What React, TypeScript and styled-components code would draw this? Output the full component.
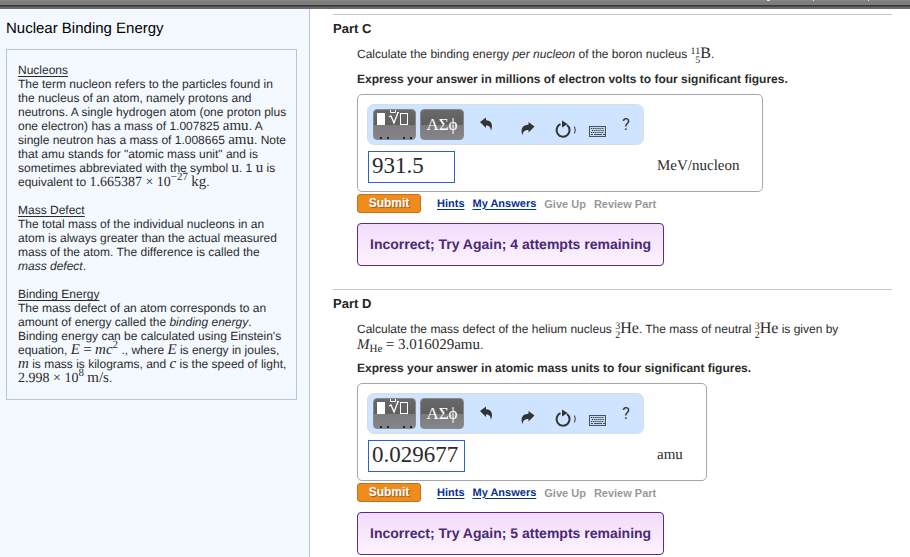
import React, { useState } from "react";
import styled, { createGlobalStyle } from "styled-components";

const SERIF = '"Liberation Serif", "Times New Roman", serif';

const GlobalStyle = createGlobalStyle`
  *, *::before, *::after { box-sizing: border-box; }
  html, body { margin: 0; padding: 0; }
  body {
    background: #fff;
    color: #2b2b2b;
    font-family: "Liberation Sans", Arial, Helvetica, sans-serif;
    font-size: 12px;
    line-height: 14px;
    text-rendering: geometricPrecision;
  }
`;

const Page = styled.div`
  display: flex;
  flex-direction: column;
  min-height: 100vh;
`;

const TopBar = styled.header`
  height: 9px;
  background: linear-gradient(#868686 0 1px, #7d7d7d 1px 5px, #383838 5px 6px, #4a4a4a 6px 7px, #6b6b6b 7px 9px);
  display: flex;
  justify-content: flex-end;
  padding-right: 40px;
`;

const Columns = styled.div`
  flex: 1;
  display: grid;
  grid-template-columns: 310px minmax(0, 1fr);
`;

const Sidebar = styled.aside`
  background: #f4f9ff;
  border-right: 1px solid #b4c7d9;
  padding: 10px 12px 0 6px;
`;

const Title = styled.h1`
  margin: 0 0 10px;
  font-size: 15px;
  line-height: 20px;
  font-weight: 400;
  color: #000;
`;

const InfoBox = styled.div`
  border: 1px solid #b4c7d9;
  padding: 13px 0 14px 11px;
  white-space: nowrap;
`;

const Topic = styled.section`
  & + & { margin-top: 14px; }
`;

const TopicTitle = styled.h2`
  margin: 0;
  font-size: 12px;
  line-height: 14px;
  font-weight: 400;
  text-decoration: underline;
  text-underline-offset: 2px;
`;

const TopicText = styled.p`
  margin: 0;
`;

const MathText = styled.span<{ $italic?: boolean; $size?: number }>`
  font-family: ${SERIF};
  font-size: ${(p) => p.$size ?? 15}px;
  font-style: ${(p) => (p.$italic ? "italic" : "normal")};
  line-height: 0;
`;

const Script = styled.span<{ $shift: number }>`
  font-family: ${SERIF};
  font-size: 11px;
  line-height: 0;
  vertical-align: ${(p) => p.$shift}px;
`;

const NuclideSymbol = styled.span`
  font-family: ${SERIF};
  font-size: 16px;
  line-height: 0;
`;

const Indices = styled.span`
  display: inline-flex;
  flex-direction: column;
  align-items: flex-end;
  height: 16px;
  vertical-align: middle;
  font-family: ${SERIF};
  font-size: 10px;
  line-height: 9px;
`;

const Main = styled.main`
  padding: 5px 18px 0 23px;
`;

const Part = styled.section`
  border-top: 1px solid #c6c6c6;
  padding-top: 5px;
  & + & { margin-top: 23px; }
`;

const PartTitle = styled.h2`
  margin: 0 0 9px;
  font-size: 13px;
  line-height: 18px;
  font-weight: 700;
  color: #222;
`;

const PartBody = styled.div`
  padding-left: 24px;
`;

const Question = styled.p`
  margin: 0;
  line-height: 14px;
`;

const Instruction = styled.p`
  margin: 9px 0 8px;
  font-weight: 700;
`;

const AnswerBox = styled.div`
  width: fit-content;
  border: 1px solid #a6a6a6;
  border-radius: 5px;
  padding: 9px 23px 8px 9px;
`;

const Toolbar = styled.div`
  display: flex;
  align-items: center;
  width: 277px;
  height: 41px;
  padding-left: 5px;
  border: 1px solid #d9dde3;
  border-radius: 7px;
  background: #cfe5ff;
`;

const PaletteButton = styled.button<{ $width: number }>`
  width: ${(p) => p.$width}px;
  height: 31px;
  margin-right: 4px;
  padding: 0;
  border: 1px solid #8a8a8c;
  border-radius: 4px;
  overflow: hidden;
  background: linear-gradient(#686868 0%, #5f5f61 50%, #7c7c80 52%, #858589 100%);
  color: #fff;
  font-family: ${SERIF};
  font-size: 17px;
  line-height: 29px;
  svg { display: block; }
`;

const ToolButton = styled.button<{ $gap?: number }>`
  width: 20px;
  height: 38px;
  margin: 0 0 0 ${(p) => p.$gap ?? 0}px;
  padding: 0;
  border: 0;
  background: none;
  color: #333;
  font-family: Roboto, sans-serif;
  font-size: 16px;
  line-height: 38px;
  svg { display: block; }
`;

const ToolGroup = styled.div`
  display: flex;
  margin-left: 10px;
`;

const EntryRow = styled.label`
  display: flex;
  align-items: center;
  margin-top: 6px;
`;

const EntrySlot = styled.span`
  width: 290px;
  padding-left: 1px;
  display: flex;
`;

const Unit = styled.span`
  padding-bottom: 2px;
  font-family: ${SERIF};
  font-size: 15px;
  line-height: 16px;
`;

const Entry = styled.input<{ $width: number }>`
  width: ${(p) => p.$width}px;
  height: 32px;
  padding: 0 0 2px 3px;
  border: 1px solid #2c62cc;
  border-radius: 0;
  outline: 0;
  background: #fff;
  color: #2b2b2b;
  font-family: ${SERIF};
  font-size: 23px;
`;

const Actions = styled.div`
  display: flex;
  align-items: center;
  gap: 8px;
  margin-top: 2px;
  font-size: 11px;
  font-weight: 700;
`;

const Submit = styled.button`
  width: 64px;
  height: 19px;
  margin-right: 8px;
  padding: 0;
  border: 1px solid #c8701c;
  border-radius: 3px;
  background: #f08c1e;
  color: #fff;
  font: 700 12px/17px "Liberation Sans", Arial, sans-serif;
  text-shadow: 1px 1px 1px #8f5a1c;
`;

const ActionLink = styled.a`
  color: #06328c;
  text-decoration: underline;
  text-underline-offset: 2px;
`;

const ActionOff = styled.button`
  padding: 0;
  border: 0;
  background: none;
  color: #999;
  font: inherit;
`;

const Feedback = styled.div`
  width: fit-content;
  margin-top: 10px;
  padding: 12px 12px 13px;
  border: 1px solid #64287e;
  border-radius: 4px;
  background: linear-gradient(#f1dcfb, #fdf3ff);
  color: #4b2a73;
  font-size: 14px;
  line-height: 16px;
  font-weight: 700;
`;

function Nuclide({ mass, charge, symbol }: { mass: string; charge: string; symbol: string }) {
  return (
    <>
      <Indices>
        <span>{mass}</span>
        <span>{charge}</span>
      </Indices>
      <NuclideSymbol>{symbol}</NuclideSymbol>
    </>
  );
}

function TemplateIcon() {
  return (
    <svg width="41" height="29" viewBox="0 0 41 29" fill="none">
      <rect x="3" y="3" width="8" height="12" fill="#fff" />
      <rect x="26.500" y="3.500" width="7" height="11" stroke="#fff" />
      <path d="M15 7l2-1 3 7L24 2.500" stroke="#fff" strokeWidth="1.300" />
      <path d="M16.500 0v2.500h5V0M23 2.500h2" stroke="#fff" />
      <path d="M6 28h2M13 28h2M29 28h2M36 28h2" stroke="#252525" strokeWidth="2" />
    </svg>
  );
}

function UndoIcon() {
  return (
    <svg width="20" height="38" viewBox="0 0 20 38">
      <path d="M2 16L8 11.500v2.800c5 0 7.500 3.500 5 10.700-.3-4-2-5.500-5-5.500V22z" fill="#333" />
    </svg>
  );
}

function RedoIcon() {
  return (
    <svg width="20" height="38" viewBox="0 0 20 38">
      <path d="M16.500 20.500L10.500 16v2.800C5 18.800 2 22.500 4.500 29.500c.3-4 2.200-5.500 6-5.500v2.500z" fill="#333" />
    </svg>
  );
}

function ResetIcon() {
  return (
    <svg width="24" height="38" viewBox="0 0 24 38" fill="none">
      <path d="M6.500 18.200a6.500 6.500 0 1 0 6.500.8" stroke="#333" strokeWidth="2" />
      <path d="M8 14.500l5.500 3.500-5.500 3.500z" fill="#333" />
      <path d="M20.500 20.500q1.500 3.500 0 7" stroke="#333" />
    </svg>
  );
}

function KeyboardIcon() {
  return (
    <svg width="20" height="38" viewBox="0 0 20 38" fill="none">
      <rect x="1.500" y="20.500" width="16" height="10" fill="#c9d8e8" stroke="#46525f" />
      <path d="M3 22.500h13M4 24.500h12M3 26.500h13" stroke="#333d48" strokeDasharray="1.300 .8" />
      <path d="M3 28.500h2M6 28.500h8M15 28.500h2" stroke="#46525f" />
    </svg>
  );
}

interface AnswerProps {
  initial: string;
  unit: string;
  entryWidth: number;
  attempts: number;
}

function Answer({ initial, unit, entryWidth, attempts }: AnswerProps) {
  const [value, setValue] = useState(initial);
  return (
    <>
      <AnswerBox>
        <Toolbar>
          <PaletteButton type="button" $width={43} aria-label="Templates">
            <TemplateIcon />
          </PaletteButton>
          <PaletteButton type="button" $width={44}>ΑΣϕ</PaletteButton>
          <ToolGroup>
            <ToolButton type="button" aria-label="Undo"><UndoIcon /></ToolButton>
            <ToolButton type="button" $gap={20} aria-label="Redo"><RedoIcon /></ToolButton>
            <ToolButton type="button" $gap={16} aria-label="Reset"><ResetIcon /></ToolButton>
            <ToolButton type="button" $gap={14} aria-label="Keyboard shortcuts"><KeyboardIcon /></ToolButton>
            <ToolButton type="button" $gap={8}>?</ToolButton>
          </ToolGroup>
        </Toolbar>
        <EntryRow>
          <EntrySlot>
            <Entry type="text" $width={entryWidth} value={value} onChange={(e) => setValue(e.target.value)} />
          </EntrySlot>
          <Unit>{unit}</Unit>
        </EntryRow>
      </AnswerBox>
      <Actions>
        <Submit type="button">Submit</Submit>
        <ActionLink href="#hints">Hints</ActionLink>
        <ActionLink href="#answers">My Answers</ActionLink>
        <ActionOff type="button" disabled>Give Up</ActionOff>
        <ActionOff type="button" disabled>Review Part</ActionOff>
      </Actions>
      <Feedback role="status">Incorrect; Try Again; {attempts} attempts remaining</Feedback>
    </>
  );
}

export default function App() {
  return (
    <Page>
      <GlobalStyle />
      <TopBar>
        <svg width="104" height="2" viewBox="0 0 104 2" fill="#e8e8e8">
          <path d="M1 0h3v1H1zM47 0h1v1h-1zM102 0h1v1h-1z" />
        </svg>
      </TopBar>
      <Columns>
        <Sidebar>
          <Title>Nuclear Binding Energy</Title>
          <InfoBox>
            <Topic>
              <TopicTitle>Nucleons</TopicTitle>
              <TopicText>
                The term nucleon refers to the particles found in<br />
                the nucleus of an atom, namely protons and<br />
                neutrons. A single hydrogen atom (one proton plus<br />
                one electron) has a mass of 1.007825 <MathText>amu</MathText>. A<br />
                single neutron has a mass of 1.008665 <MathText>amu</MathText>. Note<br />
                that amu stands for "atomic mass unit" and is<br />
                sometimes abbreviated with the symbol <MathText>u</MathText>. 1 <MathText>u</MathText> is<br />
                equivalent to <MathText $size={14}>1.665387 × 10</MathText>
                <Script $shift={6}>−27</Script> <MathText>kg</MathText>.
              </TopicText>
            </Topic>
            <Topic>
              <TopicTitle>Mass Defect</TopicTitle>
              <TopicText>
                The total mass of the individual nucleons in an<br />
                atom is always greater than the actual measured<br />
                mass of the atom. The difference is called the<br />
                <em>mass defect</em>.
              </TopicText>
            </Topic>
            <Topic>
              <TopicTitle>Binding Energy</TopicTitle>
              <TopicText>
                The mass defect of an atom corresponds to an<br />
                amount of energy called the <em>binding energy</em>.<br />
                Binding energy can be calculated using Einstein's<br />
                equation, <MathText $italic>E</MathText> <MathText>=</MathText> <MathText $italic>mc</MathText>
                <Script $shift={6}>2</Script> ., where <MathText $italic>E</MathText> is energy in joules,<br />
                <MathText $italic>m</MathText> is mass is kilograms, and <MathText $italic>c</MathText> is the speed of light,<br />
                <MathText $size={14}>2.998 × 10</MathText>
                <Script $shift={6}>8</Script> <MathText>m/s</MathText>.
              </TopicText>
            </Topic>
          </InfoBox>
        </Sidebar>
        <Main>
          <Part>
            <PartTitle>Part C</PartTitle>
            <PartBody>
              <Question>
                Calculate the binding energy <em>per nucleon</em> of the boron nucleus{" "}
                <Nuclide mass="11" charge="5" symbol="B" />.
              </Question>
              <Instruction>Express your answer in millions of electron volts to four significant figures.</Instruction>
              <Answer initial="931.5" unit="MeV/nucleon" entryWidth={87} attempts={4} />
            </PartBody>
          </Part>
          <Part>
            <PartTitle>Part D</PartTitle>
            <PartBody>
              <Question>
                Calculate the mass defect of the helium nucleus <Nuclide mass="3" charge="2" symbol="He" />. The mass of
                neutral <Nuclide mass="3" charge="2" symbol="He" /> is given by
                <br />
                <MathText $italic>M</MathText>
                <Script $shift={-3}>He</Script> <MathText>= 3.016029amu</MathText>.
              </Question>
              <Instruction>Express your answer in atomic mass units to four significant figures.</Instruction>
              <Answer initial="0.029677" unit="amu" entryWidth={97} attempts={5} />
            </PartBody>
          </Part>
        </Main>
      </Columns>
    </Page>
  );
}
